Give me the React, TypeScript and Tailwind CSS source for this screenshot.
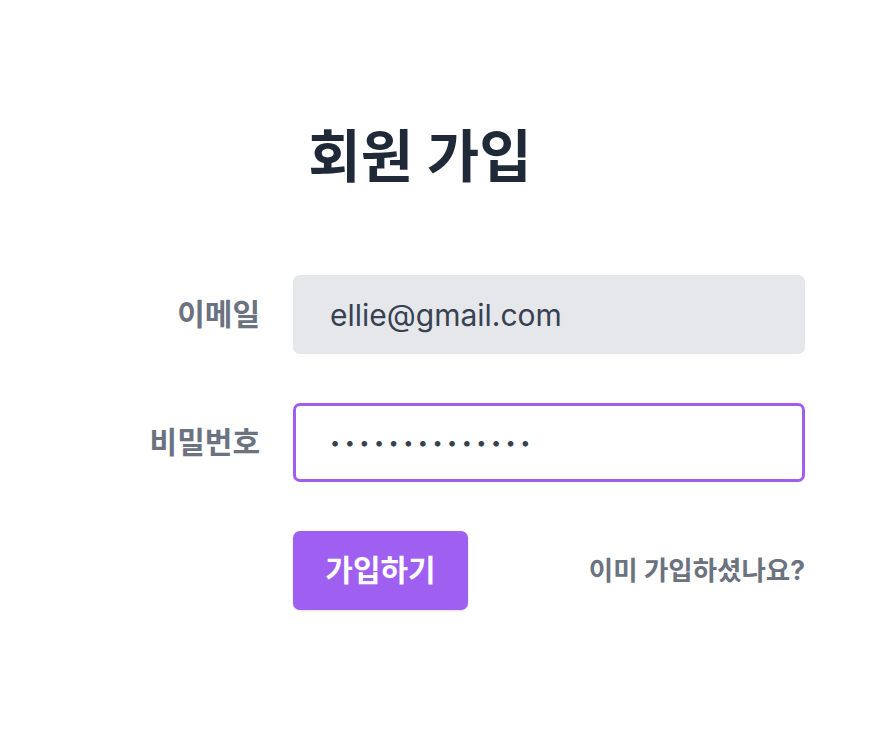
export default function App() {
  return (
    <div
      className="min-h-[742px] bg-white pt-[117px]"
      style={{ fontFamily: 'Inter, "Noto Sans CJK KR", sans-serif' }}
    >
      <div className="ml-[35px] w-[770px]">
        <h1 className="text-center text-[57px] font-bold leading-[80px] text-[#1f2937]">회원 가입</h1>

        <form className="mt-[78px] grid grid-cols-[225px_512px] items-center gap-x-[33px] gap-y-[49px]">
          <label htmlFor="email" className="text-right text-[30px] font-semibold text-[#6b7280]">
            이메일
          </label>
          <input
            id="email"
            type="email"
            defaultValue="ellie@gmail.com"
            className="h-[79px] w-[512px] rounded-[7px] border-[3px] border-[#e5e7eb] bg-[#e5e7eb] px-[34px] text-[30px] text-[#374151] outline-none"
          />

          <label htmlFor="password" className="text-right text-[30px] font-semibold text-[#6b7280]">
            비밀번호
          </label>
          <input
            id="password"
            type="password"
            defaultValue="ellieellie1234"
            className="h-[79px] w-[512px] rounded-[7px] border-[3px] border-[#9f5ef0] bg-white px-[34px] text-[18px] tracking-[4.5px] text-[#374151] outline-none"
          />

          <div />
          <div className="flex items-center justify-between">
            <button
              type="button"
              className="h-[79px] w-[175px] rounded-[7px] bg-[#9f5ff0] text-[30px] font-bold text-white shadow-sm"
            >
              가입하기
            </button>
            <a href="#" className="text-[26.5px] font-bold text-[#6b7280]">
              이미 가입하셨나요?
            </a>
          </div>
        </form>
      </div>
    </div>
  );
}
